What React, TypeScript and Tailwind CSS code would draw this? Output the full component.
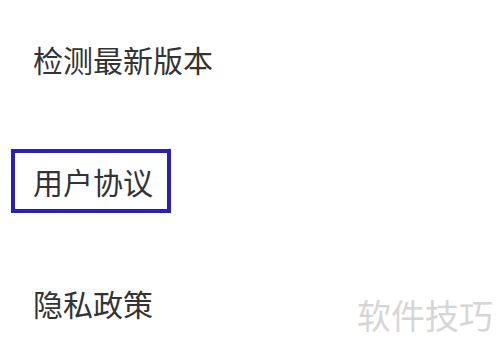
export default function App() {
  const font = { fontFamily: '"Noto Sans CJK SC", "Noto Sans", sans-serif' };
  return (
    <div className="relative w-[500px] h-[354px] bg-white overflow-hidden" style={font}>
      <div className="flex flex-col items-start pl-[11px] pt-[27px] gap-[58px]">
        <div className="h-[64px] flex items-center border-[4px] border-transparent pl-[18px] pr-[14px] text-[30px] leading-none text-[#333333]">
          检测最新版本
        </div>
        <div className="h-[64px] flex items-center border-[4px] border-[#2a1ec0] pl-[18px] pr-[14px] text-[30px] leading-none text-[#333333]">
          用户协议
        </div>
        <div className="h-[64px] flex items-center border-[4px] border-transparent pl-[18px] pr-[14px] text-[30px] leading-none text-[#333333]">
          隐私政策
        </div>
      </div>
      <div className="absolute left-[357px] top-[298px] text-[34px] leading-none text-[#d6d6d6]">
        软件技巧
      </div>
    </div>
  );
}
